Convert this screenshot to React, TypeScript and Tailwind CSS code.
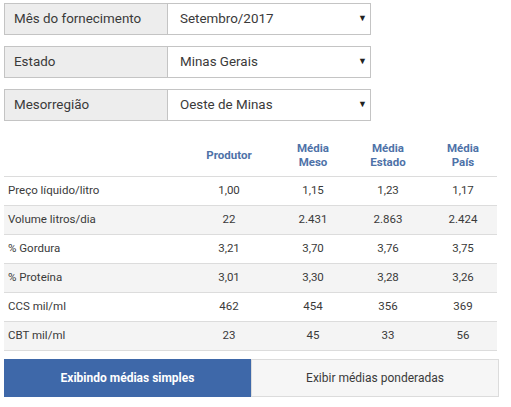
import React from 'react';

const selects = [
  { label: 'Mês do fornecimento', value: 'Setembro/2017' },
  { label: 'Estado', value: 'Minas Gerais' },
  { label: 'Mesorregião', value: 'Oeste de Minas' },
];

const rows = [
  ['Preço líquido/litro', '1,00', '1,15', '1,23', '1,17'],
  ['Volume litros/dia', '22', '2.431', '2.863', '2.424'],
  ['% Gordura', '3,21', '3,70', '3,76', '3,75'],
  ['% Proteína', '3,01', '3,30', '3,28', '3,26'],
  ['CCS mil/ml', '462', '454', '356', '369'],
  ['CBT mil/ml', '23', '45', '33', '56'],
];

const grid = 'grid grid-cols-[175px_100px_68px_82px_68px]';

const SelectRow: React.FC<{ label: string; value: string }> = ({ label, value }) => (
  <div className="flex h-[32px] w-[367px] border border-[#c4c4c4] text-[13.4px] text-[#3a3a3a]">
    <div className="flex w-[163px] items-center border-r border-[#c4c4c4] bg-[#ededed] pl-[9px]">{label}</div>
    <div className="flex flex-1 items-center justify-between bg-white pl-[12px] pr-[3px]">
      <span>{value}</span>
      <span className="text-[9px] text-[#222]">▼</span>
    </div>
  </div>
);

export default function App() {
  return (
    <div className="min-h-screen bg-white pl-[4px] pt-[3px]" style={{ fontFamily: 'Roboto, "Liberation Sans", sans-serif' }}>
      <div className="flex flex-col gap-[11px]">
        {selects.map((s) => (
          <SelectRow key={s.label} label={s.label} value={s.value} />
        ))}
      </div>

      <div className="mt-[8px] w-[493px]">
        <div className={`${grid} h-[48px] items-center border-b border-[#dcdcdc] pt-[5px] text-[11.5px] font-bold leading-[14px] text-[#4e72a8]`}>
          <div />
          <div className="text-center">Produtor</div>
          <div className="text-center">Média<br />Meso</div>
          <div className="text-center">Média<br />Estado</div>
          <div className="text-center">Média<br />País</div>
        </div>
        {rows.map((r, i) => (
          <div
            key={r[0]}
            className={`${grid} h-[29px] items-center border-b border-[#dcdcdc] text-[11.5px] text-[#3a3a3a] ${i % 2 === 1 ? 'bg-[#f4f4f4]' : 'bg-white'}`}
          >
            <div className="pl-[4px]">{r[0]}</div>
            {r.slice(1).map((v, j) => (
              <div key={j} className="text-center">{v}</div>
            ))}
          </div>
        ))}
      </div>

      <div className="mt-[8px] flex h-[38px] w-[495px] text-[12px]">
        <button className="w-[247px] bg-[#3e68a9] font-bold text-white">Exibindo médias simples</button>
        <button className="flex-1 border border-[#dcdcdc] bg-[#f6f6f6] text-[#3a3a3a]">Exibir médias ponderadas</button>
      </div>
    </div>
  );
}
